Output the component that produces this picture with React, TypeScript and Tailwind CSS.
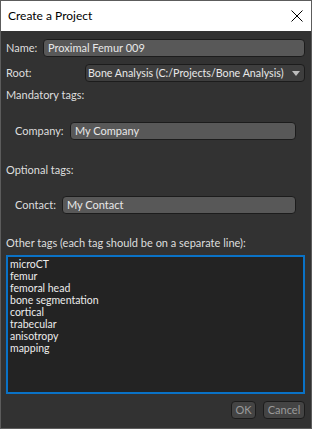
import React from "react";

const tags = [
  "microCT",
  "femur",
  "femoral head",
  "bone segmentation",
  "cortical",
  "trabecular",
  "anisotropy",
  "mapping",
];

const Field = ({ value, className }: { value: string; className?: string }) => (
  <div
    className={`flex h-[18px] items-center whitespace-nowrap rounded-[4px] border border-[#1c1c1c] bg-[#585858] px-[4px] text-[#e8e8e8] ${className ?? ""}`}
  >
    {value}
  </div>
);

export default function App() {
  return (
    <div
      className="flex h-[429px] w-[312px] flex-col overflow-hidden border border-[#5c5c5c] bg-[#323232]"
      style={{ fontFamily: 'Lato, "Noto Sans", sans-serif' }}
    >
      {/* title bar */}
      <div className="flex h-[30px] shrink-0 items-center justify-between bg-white pl-[7px] pr-[8px]">
        <span className="text-[12px] text-black">Create a Project</span>
        <svg width="12" height="12" viewBox="0 0 12 12" className="text-black">
          <path d="M0.5 0.5 L11.5 11.5 M11.5 0.5 L0.5 11.5" stroke="currentColor" strokeWidth="1" />
        </svg>
      </div>

      <div className="flex flex-1 flex-col pl-[5px] pr-[6px] pt-[8px] text-[11px] text-[#dedede]">
        <div className="flex h-[18px] items-center">
          <span className="w-[37px] whitespace-nowrap">Name:</span>
          <Field value="Proximal Femur 009" className="flex-1" />
        </div>

        <div className="mt-[7px] flex h-[18px] items-center">
          <span className="w-[79px]">Root:</span>
          <div className="flex h-[18px] flex-1 items-center justify-between whitespace-nowrap rounded-[4px] border border-[#1c1c1c] bg-[#3e3e3e] pl-[2px] pr-[4px] text-[#e8e8e8]">
            <span className="text-[10.7px]">Bone Analysis (C:/Projects/Bone Analysis)</span>
            <svg width="8" height="5" viewBox="0 0 8 5" className="shrink-0">
              <path d="M0 0 L8 0 L4 5 Z" fill="#bdbdbd" />
            </svg>
          </div>
        </div>

        <div className="mt-[5px] flex h-[16px] items-center">Mandatory tags:</div>

        <div className="mt-[19px] flex h-[18px] items-center pl-[9px] pr-[9px]">
          <span className="w-[55px] whitespace-nowrap">Company:</span>
          <Field value="My Company" className="flex-1" />
        </div>

        <div className="mt-[22px] flex h-[16px] items-center">Optional tags:</div>

        <div className="mt-[18px] flex h-[18px] items-center pl-[9px] pr-[9px]">
          <span className="w-[47px] whitespace-nowrap">Contact:</span>
          <Field value="My Contact" className="flex-1" />
        </div>

        <div className="mt-[21px] flex h-[16px] items-center whitespace-nowrap">
          Other tags (each tag should be on a separate line):
        </div>

        <div className="mt-[4px] h-[139px] border-2 border-[#0a72c6] bg-[#232323] px-[2px] pt-[1px] text-[10.5px] leading-[12px] text-[#ececec]">
          {tags.map((t) => (
            <div key={t}>{t}</div>
          ))}
        </div>

        <div className="mt-[7px] flex justify-end gap-[7px]">
          <button className="flex h-[18px] w-[25px] items-center justify-center rounded-[4px] border border-[#1c1c1c] bg-[#444444] text-[11px] text-[#9a9a9a]">
            OK
          </button>
          <button className="flex h-[18px] w-[42px] items-center justify-center rounded-[4px] border border-[#1c1c1c] bg-[#444444] text-[11px] text-[#9a9a9a]">
            Cancel
          </button>
        </div>
      </div>
    </div>
  );
}
